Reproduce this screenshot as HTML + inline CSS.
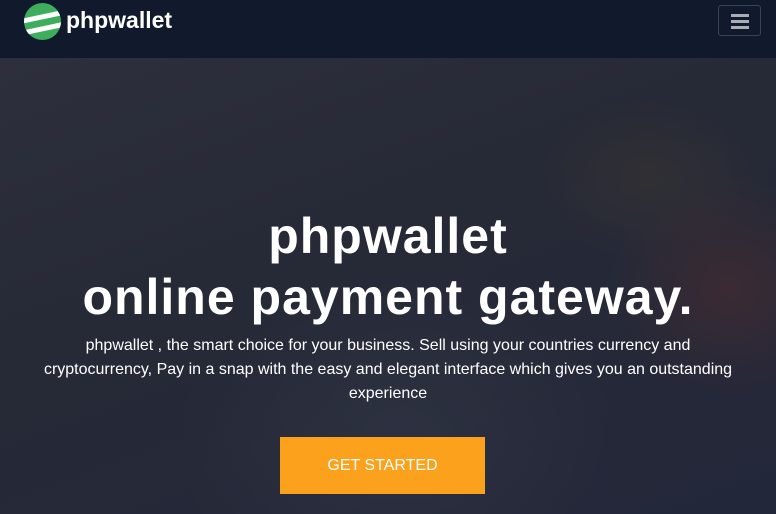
<!DOCTYPE html>
<html><head><meta charset="utf-8"><style>
*{margin:0;padding:0;box-sizing:border-box}
body{width:776px;height:514px;overflow:hidden;background:#262a36;font-family:"Liberation Sans",sans-serif;position:relative}
.nav{position:absolute;left:0;top:0;width:776px;height:58px;background:#111a2c;z-index:3}
.logo{position:absolute;left:24px;top:3px;width:37px;height:37px;border-radius:50%;background:#3fae5c;overflow:hidden}
.logo i{position:absolute;left:-5px;width:50px;height:5px;background:#fff;transform:rotate(-12deg)}
.brand{position:absolute;left:66px;top:7px;color:#fff;font-weight:bold;font-size:23px}
.burger{position:absolute;left:718px;top:5px;width:43px;height:31px;border:1px solid #3a4256;border-radius:3px}
.burger b{position:absolute;left:12px;width:18px;height:3px;background:#a9adb5}
.hero{position:absolute;left:0;top:58px;width:776px;height:456px;
background:
radial-gradient(ellipse 120px 110px at 730px 230px,rgba(110,45,40,.3),transparent),
radial-gradient(ellipse 120px 80px at 650px 120px,rgba(80,65,45,.25),transparent),
radial-gradient(ellipse 220px 180px at 400px 380px,rgba(60,65,80,.35),transparent),
linear-gradient(160deg,#2d303c 0%,#262a36 40%,#23273a 100%)}
h1{position:absolute;left:0;width:776px;text-align:center;color:#fff;font-weight:bold;font-size:50px;letter-spacing:1px;line-height:60px}
p{position:absolute;left:0;width:776px;top:334px;text-align:center;color:#fff;font-size:16px;line-height:24px;white-space:nowrap}
.btn{position:absolute;left:280px;top:437px;width:205px;height:57px;background:#fba11b;color:#fff;font-size:16px;text-align:center;line-height:57px}
</style></head><body>
<div class="hero"></div>
<div class="nav">
<div class="logo"><i style="top:11px"></i><i style="top:23px"></i></div>
<div class="brand">phpwallet</div>
<div class="burger"><b style="top:8px"></b><b style="top:14px"></b><b style="top:20px"></b></div>
</div>
<h1 style="top:206px">phpwallet</h1>
<h1 style="top:267px">online payment gateway.</h1>
<p>phpwallet , the smart choice for your business. Sell using your countries currency and<br>cryptocurrency, Pay in a snap with the easy and elegant interface which gives you an outstanding<br>experience</p>
<div class="btn">GET STARTED</div>
</body></html>
